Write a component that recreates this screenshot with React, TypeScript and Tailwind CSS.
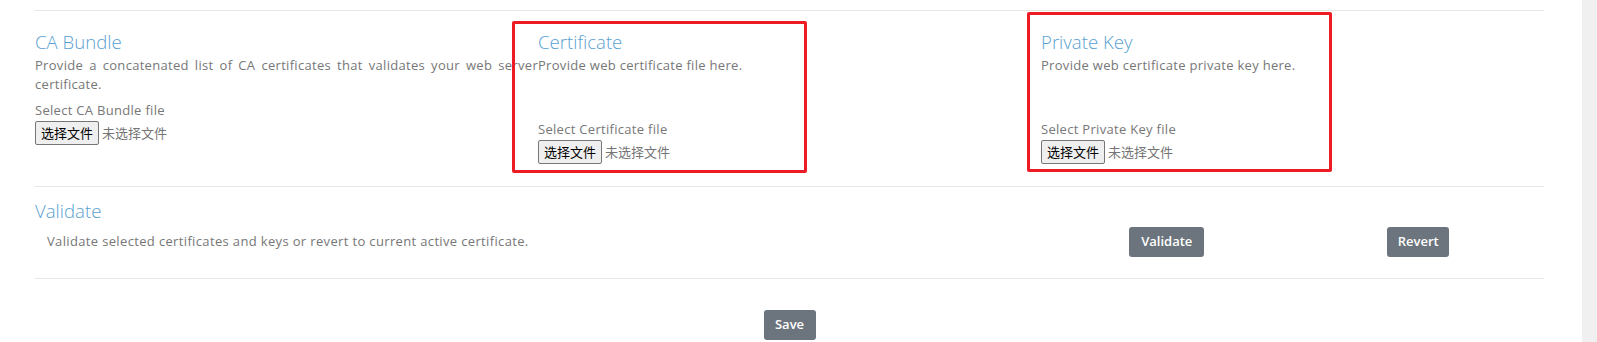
import React from "react";

const FileInput = () => (
  <div className="flex h-[24px] items-center">
    <span className="flex h-[24px] w-[64px] items-center justify-center rounded-[2px] border border-[#767676] bg-[#efefef] text-[13px] text-black [font-family:'Noto_Sans_CJK_SC',sans-serif]">
      选择文件
    </span>
    <span className="ml-[3px] text-[13px] text-[#757575] [font-family:'Noto_Sans_CJK_SC',sans-serif]">
      未选择文件
    </span>
  </div>
);

type CertColumnProps = {
  title: string;
  description: string;
  label: string;
  justify?: boolean;
};

const CertColumn = ({ title, description, label, justify }: CertColumnProps) => (
  <div>
    <h3 className="text-[18.6px] font-light leading-[24px] text-[#5a9fd1]">{title}</h3>
    <p
      className={
        justify
          ? "mt-[2px] mb-[7px] text-justify text-[13px] leading-[19px] tracking-[0.3px] text-[#777]"
          : "mt-[2px] mb-[7px] min-h-[57px] text-[13px] leading-[19px] tracking-[0.3px] text-[#777]"
      }
    >
      {description}
    </p>
    <label className="block text-[13px] leading-[19.5px] tracking-[0.3px] text-[#777]">{label}</label>
    <FileInput />
  </div>
);

const GrayButton = ({ children, width }: { children: React.ReactNode; width: string }) => (
  <button
    className={`flex h-[30px] items-center justify-center rounded-[3px] bg-[#6c757d] text-[13px] font-semibold text-white ${width}`}
  >
    {children}
  </button>
);

export default function App() {
  return (
    <div className="relative flex h-[342px] overflow-hidden bg-white [font-family:'Open_Sans',sans-serif]">
      <div className="flex-1 pl-[35px] pr-[38px] pt-[10px]">
        <section className="grid grid-cols-3 border-t border-[#e6e6e6] pt-[19px] pb-[22px]">
          <CertColumn
            title="CA Bundle"
            description="Provide a concatenated list of CA certificates that validates your web server certificate."
            label="Select CA Bundle file"
            justify
          />
          <CertColumn
            title="Certificate"
            description="Provide web certificate file here."
            label="Select Certificate file"
          />
          <CertColumn
            title="Private Key"
            description="Provide web certificate private key here."
            label="Select Private Key file"
          />
        </section>

        <section className="border-t border-[#e6e6e6] pt-[12px] pb-[21px]">
          <h3 className="text-[18.6px] font-light leading-[24px] text-[#5a9fd1]">Validate</h3>
          <div className="mt-[4px] grid grid-cols-6 items-center">
            <p className="col-span-4 pl-[12px] text-[13px] leading-[19.5px] tracking-[0.35px] text-[#777]">
              Validate selected certificates and keys or revert to current active certificate.
            </p>
            <div className="flex justify-center">
              <GrayButton width="w-[75px]">Validate</GrayButton>
            </div>
            <div className="flex justify-center">
              <GrayButton width="w-[62px]">Revert</GrayButton>
            </div>
          </div>
        </section>

        <div className="flex justify-center border-t border-[#e6e6e6] pt-[31px]">
          <GrayButton width="w-[52px]">Save</GrayButton>
        </div>
      </div>

      <div className="w-[15px] bg-[#f0f0f0]" />

      {/* annotation boxes */}
      <div className="pointer-events-none absolute left-[512px] top-[21px] h-[152px] w-[295px] rounded-[2px] border-[3px] border-[#ed1c24]" />
      <div className="pointer-events-none absolute left-[1027px] top-[12px] h-[160px] w-[305px] rounded-[2px] border-[3px] border-[#ed1c24]" />
    </div>
  );
}
